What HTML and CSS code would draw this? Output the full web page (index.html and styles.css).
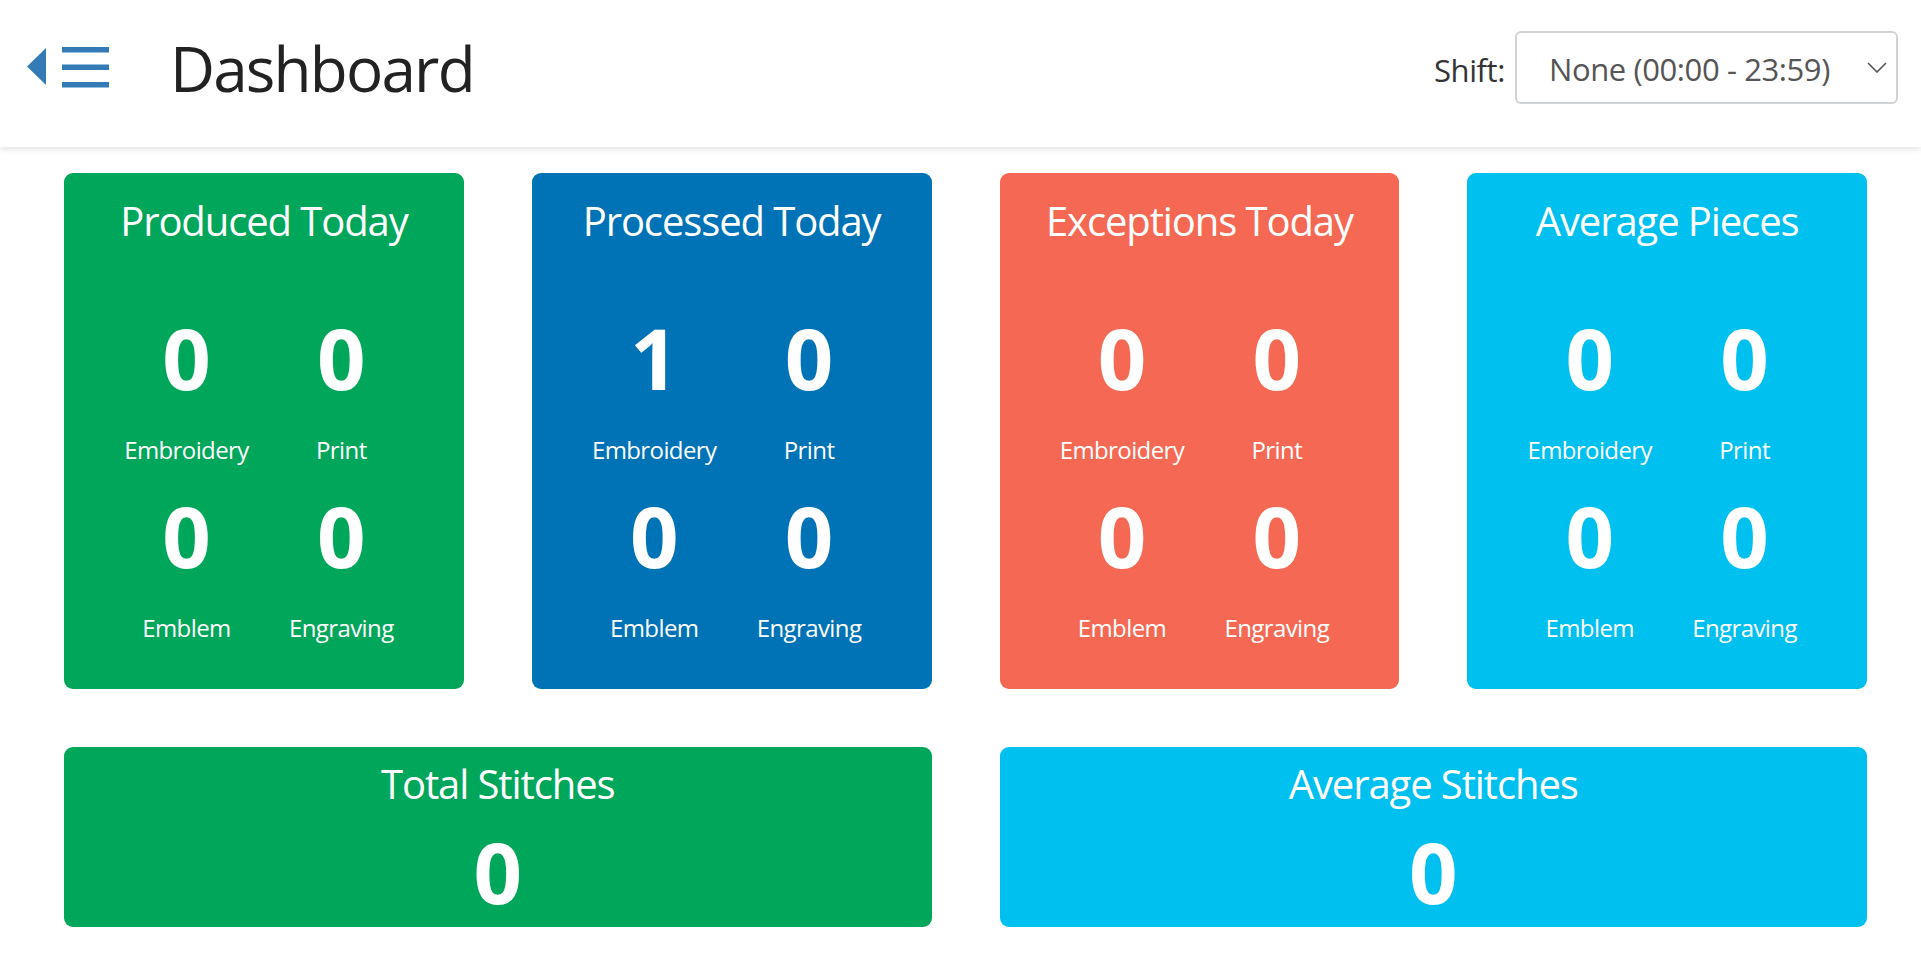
FILE: index.html
```html
<!DOCTYPE html>
<html lang="en">
<head>
    <meta charset="UTF-8">
    <meta name="viewport" content="width=device-width, initial-scale=1.0">
    <title>Dashboard</title>
    <link rel="stylesheet" href="styles.css">
</head>
<body>
    <header class="topbar">
        <button type="button" class="menu-toggle" aria-label="Toggle menu">
            <svg width="82" height="41" viewBox="0 0 82 41">
                <polygon points="0,19.5 19,1 19,38" fill="#337ab7"/>
                <rect x="35" y="0" width="47" height="5.5" fill="#337ab7"/>
                <rect x="35" y="17.5" width="47" height="5.5" fill="#337ab7"/>
                <rect x="35" y="35" width="47" height="5.5" fill="#337ab7"/>
            </svg>
        </button>
        <h1 class="page-title">Dashboard</h1>
        <div class="shift-picker">
            <label for="shift">Shift:</label>
            <div class="select-wrap">
                <select id="shift">
                    <option>None (00:00 - 23:59)</option>
                </select>
                <svg class="chevron" width="20" height="11" viewBox="0 0 20 11">
                    <polyline points="1,1 10,10 19,1" fill="none" stroke="#555" stroke-width="1.6"/>
                </svg>
            </div>
        </div>
    </header>

    <main class="content">
        <div class="row row-4">
            <div class="stat-card bg-green">
                <h3 class="stat-title">Produced Today</h3>
                <div class="stat-grid">
                    <div class="stat"><span class="stat-value">0</span><span class="stat-label">Embroidery</span></div>
                    <div class="stat"><span class="stat-value">0</span><span class="stat-label">Print</span></div>
                    <div class="stat"><span class="stat-value">0</span><span class="stat-label">Emblem</span></div>
                    <div class="stat"><span class="stat-value">0</span><span class="stat-label">Engraving</span></div>
                </div>
            </div>
            <div class="stat-card bg-blue">
                <h3 class="stat-title">Processed Today</h3>
                <div class="stat-grid">
                    <div class="stat"><span class="stat-value">1</span><span class="stat-label">Embroidery</span></div>
                    <div class="stat"><span class="stat-value">0</span><span class="stat-label">Print</span></div>
                    <div class="stat"><span class="stat-value">0</span><span class="stat-label">Emblem</span></div>
                    <div class="stat"><span class="stat-value">0</span><span class="stat-label">Engraving</span></div>
                </div>
            </div>
            <div class="stat-card bg-red">
                <h3 class="stat-title">Exceptions Today</h3>
                <div class="stat-grid">
                    <div class="stat"><span class="stat-value">0</span><span class="stat-label">Embroidery</span></div>
                    <div class="stat"><span class="stat-value">0</span><span class="stat-label">Print</span></div>
                    <div class="stat"><span class="stat-value">0</span><span class="stat-label">Emblem</span></div>
                    <div class="stat"><span class="stat-value">0</span><span class="stat-label">Engraving</span></div>
                </div>
            </div>
            <div class="stat-card bg-aqua">
                <h3 class="stat-title">Average Pieces</h3>
                <div class="stat-grid">
                    <div class="stat"><span class="stat-value">0</span><span class="stat-label">Embroidery</span></div>
                    <div class="stat"><span class="stat-value">0</span><span class="stat-label">Print</span></div>
                    <div class="stat"><span class="stat-value">0</span><span class="stat-label">Emblem</span></div>
                    <div class="stat"><span class="stat-value">0</span><span class="stat-label">Engraving</span></div>
                </div>
            </div>
        </div>

        <div class="row row-2">
            <div class="total-card bg-green">
                <h3 class="stat-title">Total Stitches</h3>
                <span class="stat-value">0</span>
            </div>
            <div class="total-card bg-aqua">
                <h3 class="stat-title">Average Stitches</h3>
                <span class="stat-value">0</span>
            </div>
        </div>
    </main>
</body>
</html>
```

FILE: styles.css
```css
body {
    margin: 0;
    font-family: "Open Sans", "Noto Sans", Arial, sans-serif;
    color: #333;
    background: #fff;
}

/* top bar */
.topbar {
    display: flex;
    align-items: center;
    height: 135px;
    padding: 0 23px 12px 27px;
    background: #fff;
    box-shadow: 0 2px 6px rgba(0, 0, 0, 0.12);
    position: relative;
}
.menu-toggle {
    display: flex;
    padding: 0;
    border: none;
    background: none;
    cursor: pointer;
}
.page-title {
    margin: 0 0 0 61px;
    font-size: 62px;
    font-weight: normal;
    letter-spacing: -1.8px;
    line-height: 76px;
    color: #222;
}
.shift-picker {
    margin-left: auto;
    display: flex;
    align-items: center;
    gap: 10px;
}
.shift-picker label {
    font-size: 31px;
    letter-spacing: -0.4px;
    color: #333;
    margin-top: 4px;
}
.select-wrap {
    position: relative;
}
.select-wrap select {
    width: 383px;
    height: 73px;
    padding: 3px 40px 0 32px;
    font-family: inherit;
    font-size: 31px;
    letter-spacing: -0.4px;
    color: #555;
    background: #fff;
    border: 2px solid #d0d3d6;
    border-radius: 6px;
    appearance: none;
    -webkit-appearance: none;
    box-sizing: border-box;
}
.select-wrap .chevron {
    position: absolute;
    right: 11px;
    top: 31px;
    pointer-events: none;
}

/* cards */
.content {
    padding: 26px 54px 0 64px;
}
.row {
    display: grid;
    gap: 68px;
    margin-bottom: 58px;
}
.row-4 {
    grid-template-columns: repeat(4, 1fr);
}
.row-2 {
    grid-template-columns: repeat(2, 1fr);
}
.stat-card, .total-card {
    color: #fff;
    border-radius: 9px;
    text-align: center;
}
.stat-card {
    padding: 24px 0 46px;
}
.total-card {
    padding: 13px 20px 6px;
    display: flex;
    flex-direction: column;
    align-items: center;
}
.stat-title {
    margin: 0;
    font-size: 40px;
    font-weight: normal;
    letter-spacing: -1.1px;
    line-height: 48px;
    white-space: nowrap;
}
.stat-card .stat-title {
    margin-bottom: 62px;
}
.total-card .stat-title {
    margin-bottom: 13px;
}
.stat-grid {
    display: grid;
    grid-template-columns: 1fr 1fr;
    row-gap: 20px;
    padding: 0 45px;
}
.stat {
    display: flex;
    flex-direction: column;
    align-items: center;
}
.stat-value {
    font-size: 85px;
    font-weight: bold;
    line-height: 100px;
}
.stat-label {
    margin-top: 28px;
    font-size: 24px;
    letter-spacing: -0.6px;
    line-height: 30px;
}

.bg-green { background-color: #00a65a; }
.bg-blue { background-color: #0073b7; }
.bg-red { background-color: #f56954; }
.bg-aqua { background-color: #00c0ef; }
```
